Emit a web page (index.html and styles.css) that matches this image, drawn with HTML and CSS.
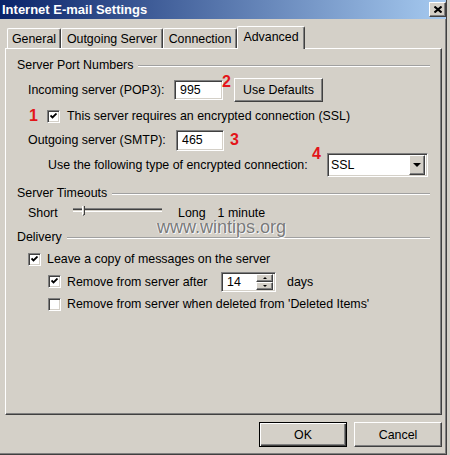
FILE: index.html
```html
<!DOCTYPE html>
<html>
<head>
<meta charset="utf-8">
<title>Internet E-mail Settings</title>
<link rel="stylesheet" href="styles.css">
</head>
<body>
<div class="window">
  <div class="titlebar">
    <span class="title">Internet E-mail Settings</span>
    <span class="close"><svg width="8" height="7" viewBox="0 0 8 7"><path d="M0.5 0.5L7.5 6.5M7.5 0.5L0.5 6.5" stroke="#000" stroke-width="2"/></svg></span>
  </div>
  <div class="tabs">
    <div class="tab t-general">General</div>
    <div class="tab t-outgoing">Outgoing Server</div>
    <div class="tab t-connection">Connection</div>
    <div class="tab t-advanced active">Advanced</div>
  </div>
  <div class="panel">
    <div class="group-head gh-ports"><span>Server Port Numbers</span><i class="etch"></i></div>
    <div class="row r-incoming">
      <span class="label w-incoming">Incoming server (POP3):</span>
      <span class="field f-incoming">995</span>
      <span class="mark m2">2</span>
      <span class="btn btn-defaults">Use Defaults</span>
    </div>
    <div class="row r-ssl">
      <span class="mark m1">1</span>
      <span class="check chk-ssl"><svg width="7" height="7" viewBox="0 0 7 7"><path d="M0.5 2.5L2.5 4.5L6.5 0.5" fill="none" stroke="#000" stroke-width="1.8"/></svg></span>
      <span class="label l-check">This server requires an encrypted connection (SSL)</span>
    </div>
    <div class="row r-outgoing">
      <span class="label w-outgoing">Outgoing server (SMTP):</span>
      <span class="field f-outgoing">465</span>
      <span class="mark m3">3</span>
    </div>
    <div class="row r-enc">
      <span class="label w-enc">Use the following type of encrypted connection:</span>
      <span class="mark m4">4</span>
      <span class="select"><span class="sel-text">SSL</span><span class="drop"><i class="tri"></i></span></span>
    </div>
    <div class="group-head gh-timeouts"><span>Server Timeouts</span><i class="etch"></i></div>
    <div class="row r-short">
      <span class="label w-short">Short</span>
      <svg class="slider" width="89" height="14" viewBox="0 0 89 14">
        <rect x="0" y="2" width="89" height="1" fill="#808080"/>
        <rect x="0" y="3" width="89" height="1" fill="#404040"/>
        <rect x="0" y="4" width="89" height="1" fill="#d4d0c8"/>
        <rect x="0" y="5" width="89" height="1" fill="#ffffff"/>
        <rect x="9" y="0" width="3" height="9" fill="#d4d0c8"/>
        <rect x="9" y="0" width="1" height="9" fill="#ffffff"/>
        <rect x="11" y="0" width="1" height="9" fill="#404040"/>
        <rect x="10" y="8" width="1" height="2" fill="#808080"/>
      </svg>
      <span class="label l-long">Long</span>
      <span class="label l-minute">1 minute</span>
    </div>
    <div class="group-head gh-delivery"><span>Delivery</span><i class="etch"></i></div>
    <div class="row r-leave">
      <span class="check chk-leave"><svg width="7" height="7" viewBox="0 0 7 7"><path d="M0.5 2.5L2.5 4.5L6.5 0.5" fill="none" stroke="#000" stroke-width="1.8"/></svg></span>
      <span class="label l-check2">Leave a copy of messages on the server</span>
    </div>
    <div class="row r-after">
      <span class="check chk-sub"><svg width="7" height="7" viewBox="0 0 7 7"><path d="M0.5 2.5L2.5 4.5L6.5 0.5" fill="none" stroke="#000" stroke-width="1.8"/></svg></span>
      <span class="label l-check2 w-after">Remove from server after</span>
      <span class="field spin"><span class="spin-text">14</span><span class="spin-btns"><span class="sb"><i class="up"></i></span><span class="sb"><i class="down"></i></span></span></span>
      <span class="label l-days">days</span>
    </div>
    <div class="row r-deleted">
      <span class="check chk-sub"></span>
      <span class="label l-check2">Remove from server when deleted from 'Deleted Items'</span>
    </div>
    <div class="watermark">www.wintips.org</div>
  </div>
  <div class="actions">
    <span class="btn btn-ok">OK</span>
    <span class="btn btn-cancel">Cancel</span>
  </div>
</div>
</body>
</html>
```

FILE: styles.css
```css
* { box-sizing: border-box; }
html, body { margin: 0; padding: 0; }
body {
  width: 450px;
  height: 455px;
  overflow: hidden;
  background: #d4d0c8;
  font-family: "Liberation Sans", Arial, sans-serif;
  font-size: 12.4px;
  color: #000;
}
.window {
  position: relative;
  width: 447px;
  height: 455px;
  background: #d4d0c8;
  border-right: 1px solid #404040;
  border-bottom: 1px solid #404040;
  box-shadow: inset -1px -1px 0 #808080;
}
.titlebar {
  height: 19px;
  display: flex;
  align-items: center;
  justify-content: space-between;
  padding: 0 0 0 2px;
  background: linear-gradient(to right, #0a246a, #a6caf0);
}
.title {
  color: #fff;
  font-weight: bold;
  font-size: 13px;
  white-space: nowrap;
}
.close {
  width: 17px;
  height: 15px;
  background: #d4d0c8;
  border: 1px solid;
  border-color: #fff #404040 #404040 #fff;
  box-shadow: inset -1px -1px 0 #808080;
  display: flex;
  align-items: center;
  justify-content: center;
}
.tabs {
  position: relative;
  z-index: 1;
  height: 29px;
  display: flex;
  align-items: flex-end;
  padding-left: 7px;
}
.tab {
  height: 20px;
  display: flex;
  align-items: center;
  justify-content: center;
  border-left: 1px solid #fff;
  border-top: 1px solid #fff;
  border-right: 1px solid #404040;
  box-shadow: inset -1px 0 0 #808080;
  border-radius: 2px 2px 0 0;
  white-space: nowrap;
}
.t-general { width: 54px; }
.t-outgoing { width: 102px; }
.t-connection { width: 74px; }
.t-advanced { width: 68px; }
.tab.active {
  height: 23px;
  margin-bottom: -1px;
  background: #d4d0c8;
  padding-bottom: 3px;
}
.panel {
  position: relative;
  margin-left: 5px;
  width: 437px;
  height: 367px;
  border: 1px solid;
  border-color: #fff #404040 #404040 #fff;
  box-shadow: inset -1px -1px 0 #808080;
  padding: 9px 11px 0 11px;
  display: flex;
  flex-direction: column;
}
.group-head {
  height: 14px;
  display: flex;
  align-items: center;
  white-space: nowrap;
}
.etch {
  flex: 1;
  height: 2px;
  margin-left: 5px;
  margin-top: 2px;
  border-top: 1px solid #a0a0a0;
  border-bottom: 1px solid #fff;
}
.gh-timeouts { margin-top: 9px; }
.gh-delivery { margin-top: 10px; }
.row {
  display: flex;
  align-items: center;
  white-space: nowrap;
}
.label { white-space: nowrap; }
.r-incoming { height: 24px; margin-top: 6px; }
.r-ssl { height: 14px; margin-top: 7px; }
.r-outgoing { height: 22px; margin-top: 6px; }
.r-enc { height: 24px; margin-top: 2px; }
.r-short { height: 14px; margin-top: 6px; line-height: 12px; }
.r-leave { height: 14px; margin-top: 8px; }
.r-after { height: 21px; margin-top: 5px; }
.r-deleted { height: 14px; margin-top: 5px; }

.w-incoming { margin-left: 11px; width: 146px; }
.w-outgoing { margin-left: 11px; width: 148px; }
.w-enc { margin-left: 31px; width: 264px; }
.w-short { margin-left: 11px; width: 45px; }
.l-long { margin-left: 16px; }
.l-minute { margin-left: 12px; }
.l-check { margin-left: 7px; }
.l-check2 { margin-left: 6px; }
.w-after { width: 154px; }
.l-days { margin-left: 11px; }

.field {
  display: flex;
  align-items: center;
  background: #fff;
  border: 1px solid;
  border-color: #808080 #fff #fff #808080;
  box-shadow: inset 1px 1px 0 #404040, inset -1px -1px 0 #d4d0c8;
  padding-left: 5px;
}
.f-incoming { width: 49px; height: 20px; }
.f-outgoing { width: 48px; height: 21px; }

.mark {
  color: #e3151a;
  font-weight: bold;
  font-size: 16px;
  line-height: 12px;
  font-family: "Liberation Sans", Arial, sans-serif;
}
.m1 { margin-left: 12px; width: 9px; }
.m2 { align-self: flex-start; margin-top: -2px; margin-left: -1px; width: 11px; }
.m3 { margin-left: 6px; }
.m4 { align-self: flex-start; margin-top: -5px; width: 10px; }

.btn {
  display: flex;
  align-items: center;
  justify-content: center;
  background: #d4d0c8;
  border: 1px solid;
  border-color: #fff #404040 #404040 #fff;
  box-shadow: inset -1px -1px 0 #808080;
  white-space: nowrap;
}
.btn-defaults { width: 89px; height: 24px; margin-left: 1px; }

.check {
  width: 13px;
  height: 13px;
  flex: none;
  display: flex;
  align-items: center;
  justify-content: center;
  background: #fff;
  border: 1px solid;
  border-color: #808080 #fff #fff #808080;
  box-shadow: inset 1px 1px 0 #404040, inset -1px -1px 0 #d4d0c8;
}
.chk-ssl { margin-left: 9px; }
.chk-leave { margin-left: 11px; }
.chk-sub { margin-left: 31px; }

.select {
  display: flex;
  align-items: center;
  margin-left: 5px;
  width: 101px;
  height: 24px;
  background: #fff;
  border: 1px solid;
  border-color: #808080 #fff #fff #808080;
  box-shadow: inset 1px 1px 0 #404040, inset -1px -1px 0 #d4d0c8;
  padding: 2px 2px 2px 3px;
}
.sel-text { flex: 1; }
.drop {
  width: 16px;
  height: 20px;
  display: flex;
  align-items: center;
  justify-content: center;
  background: #d4d0c8;
  border: 1px solid;
  border-color: #fff #404040 #404040 #fff;
  box-shadow: inset -1px -1px 0 #808080;
}
.tri {
  width: 0;
  height: 0;
  border-left: 4px solid transparent;
  border-right: 4px solid transparent;
  border-top: 4px solid #000;
}
.slider { flex: none; }

.spin {
  width: 55px;
  height: 20px;
  padding: 2px 2px 2px 5px;
}
.spin-text { flex: 1; }
.spin-btns {
  width: 17px;
  height: 16px;
  display: flex;
  flex-direction: column;
}
.sb {
  flex: 1;
  display: flex;
  align-items: center;
  justify-content: center;
  background: #d4d0c8;
  border: 1px solid;
  border-color: #fff #404040 #404040 #fff;
  box-shadow: inset -1px -1px 0 #808080;
}
.up {
  width: 0; height: 0;
  border-left: 2px solid transparent;
  border-right: 2px solid transparent;
  border-bottom: 2px solid #000;
}
.down {
  width: 0; height: 0;
  border-left: 2px solid transparent;
  border-right: 2px solid transparent;
  border-top: 2px solid #000;
}
.watermark {
  position: absolute;
  left: 151px;
  top: 172px;
  font-family: "Liberation Sans", Arial, sans-serif;
  font-size: 18px;
  line-height: 12px;
  color: #7a7a7a;
  text-shadow: 1px 1px 0 #f4f4f4, -1px 0 0 #e8e8e8;
  white-space: nowrap;
}
.actions {
  display: flex;
  justify-content: flex-end;
  gap: 7px;
  width: 442px;
  margin-top: 7px;
}
.btn-ok, .btn-cancel { width: 88px; height: 25px; }
.btn-ok {
  border: 1px solid #000;
  box-shadow: inset 1px 1px 0 #fff, inset -1px -1px 0 #404040, inset -2px -2px 0 #808080;
}
```
